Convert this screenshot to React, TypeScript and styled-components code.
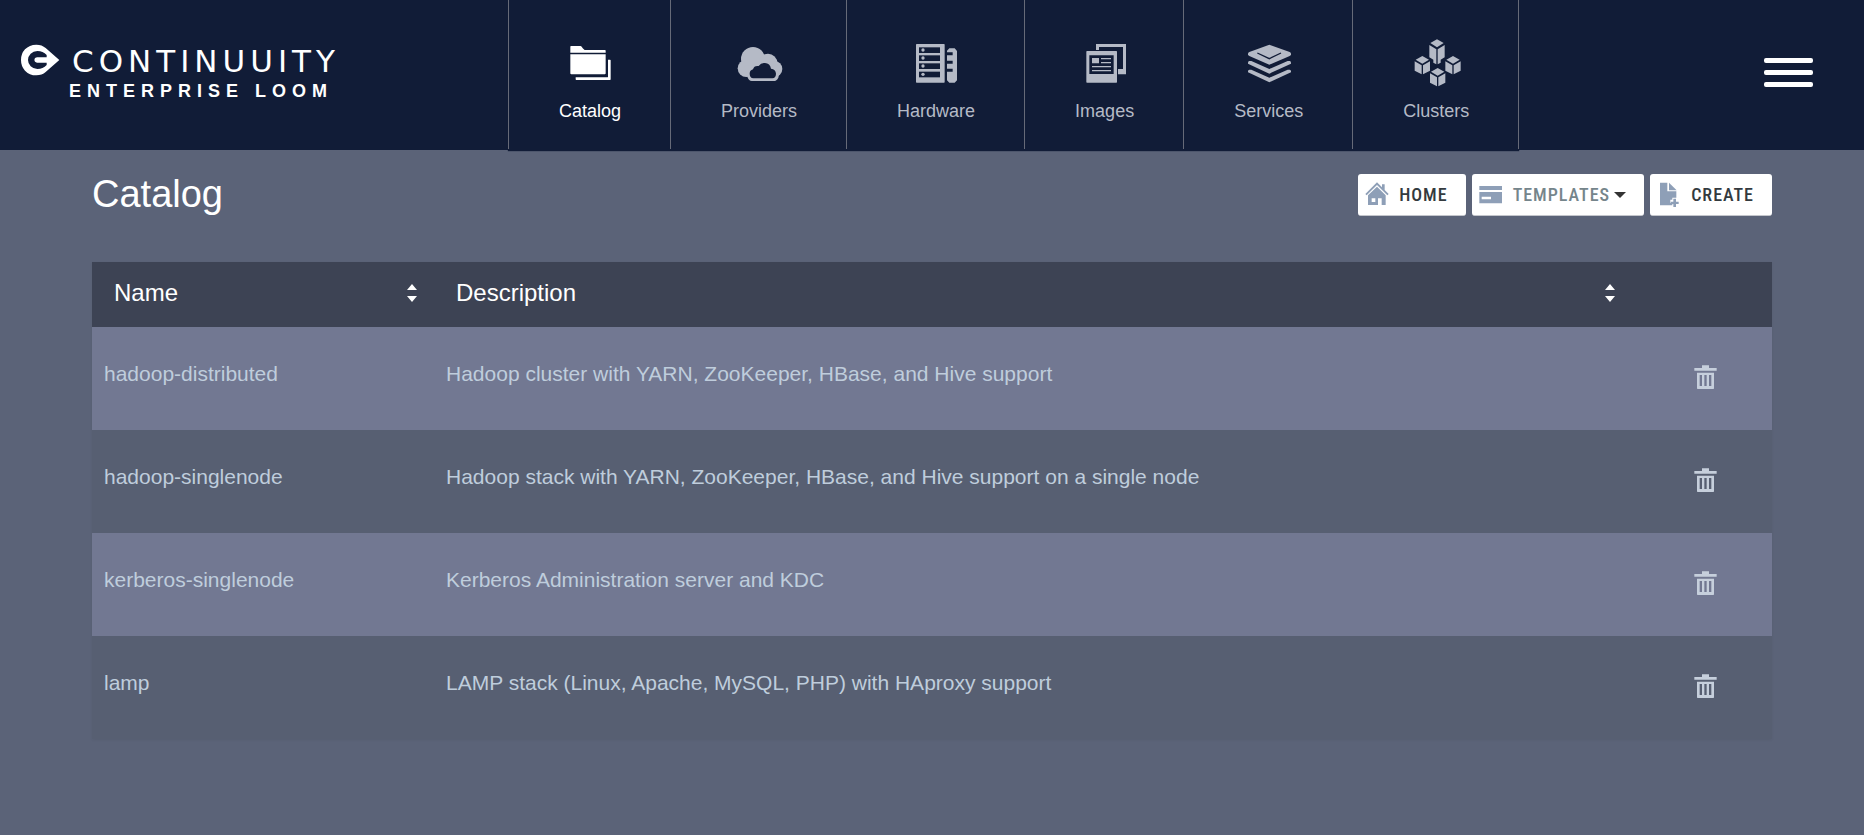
import React from 'react';
import styled, { createGlobalStyle } from 'styled-components';

const navy = '#111c37';

const GlobalStyle = createGlobalStyle`
  *, *::before, *::after { box-sizing: border-box; }
  html { background: #5b6378; }
  body {
    margin: 0;
    background: #5b6378;
    color: #ffffff;
    font-family: "Liberation Sans", Arial, sans-serif;
  }
`;

const Header = styled.header`
  display: flex;
  align-items: stretch;
  height: 150px;
  background: ${navy};
`;

const Logo = styled.a`
  flex: 0 0 508px;
  display: flex;
  align-items: flex-start;
  gap: 12px;
  padding: 44px 0 0 20px;
  color: #ffffff;
  text-decoration: none;
`;

const LogoMark = styled.svg`
  flex: none;
  width: 40px;
  height: 32px;
`;

const LogoWords = styled.span`
  display: flex;
  flex-direction: column;
  white-space: nowrap;
`;

const Brand = styled.span`
  font-family: "DejaVu Sans", sans-serif;
  font-size: 31px;
  font-weight: 400;
  line-height: 34px;
  letter-spacing: 5px;
`;

const Product = styled.span`
  font-size: 18px;
  font-weight: 700;
  line-height: 26px;
  letter-spacing: 6px;
  margin-left: -3px;
`;

const Nav = styled.nav`
  display: flex;
  height: 149px;
  border-right: 1px solid #666a78;
  box-shadow: 0 2px 1px ${navy};
`;

const NavItem = styled.a<{ $active?: boolean }>`
  display: flex;
  flex-direction: column;
  align-items: center;
  gap: 12px;
  padding: 39px 49px 0 50px;
  border-left: 1px solid #666a78;
  color: ${(p) => (p.$active ? '#ffffff' : '#b5bac6')};
  font-size: 18px;
  line-height: 24px;
  text-decoration: none;
`;

const NavIcon = styled.svg`
  width: 48px;
  height: 48px;
  overflow: visible;
  fill: currentColor;
`;

const MenuButton = styled.button`
  align-self: flex-start;
  display: flex;
  flex-direction: column;
  gap: 7px;
  margin: 58px 51px 0 auto;
  padding: 0;
  border: 0;
  background: none;
  cursor: pointer;
`;

const MenuBar = styled.span`
  width: 49px;
  height: 5px;
  border-radius: 2px;
  background: #ffffff;
`;

const Main = styled.main`
  padding: 0 92px 48px;
`;

const TitleRow = styled.div`
  display: flex;
  justify-content: space-between;
  align-items: flex-start;
  height: 112px;
  padding-top: 24px;
`;

const Title = styled.h1`
  margin: 0;
  font-size: 38px;
  font-weight: 400;
  line-height: 40px;
`;

const Toolbar = styled.div`
  display: flex;
  gap: 6px;
`;

const ToolButton = styled.button<{ $muted?: boolean }>`
  display: flex;
  align-items: center;
  height: 42px;
  padding: 0 18px 0 7px;
  border: 1px solid #c4c6cc;
  border-width: 0 0 1px;
  border-radius: 3px;
  background: #ffffff;
  color: ${(p) => (p.$muted ? '#75858b' : '#333a3e')};
  font-family: "Liberation Sans Narrow", "Roboto Condensed", sans-serif;
  font-size: 18px;
  font-weight: 500;
  line-height: 24px;
  letter-spacing: 1px;
  cursor: pointer;
`;

const ToolIcon = styled.svg`
  width: 24px;
  height: 26px;
  margin-right: 10px;
  fill: #8e9fb7;
`;

const Caret = styled.span`
  margin-left: 4px;
  border: 6px solid transparent;
  border-top-color: #333333;
  border-bottom: 0;
`;

const Table = styled.table`
  width: 100%;
  table-layout: fixed;
  border-collapse: collapse;
  box-shadow: 0 1px 3px rgba(0, 0, 0, 0.06);
`;

const HeadCell = styled.th<{ $width?: string }>`
  width: ${(p) => p.$width ?? 'auto'};
  height: 65px;
  padding: 0 17px 0 22px;
  background: #3d4354;
  font-size: 24px;
  font-weight: 400;
  line-height: 28px;
  text-align: left;
`;

const SortButton = styled.button`
  display: flex;
  align-items: center;
  justify-content: space-between;
  width: 100%;
  padding: 0 0 4px;
  border: 0;
  background: none;
  color: inherit;
  font: inherit;
  cursor: pointer;
`;

const SortIcon = styled.svg`
  width: 10px;
  height: 18px;
  fill: #ffffff;
`;

const Row = styled.tr`
  height: 103px;
  background: #575f72;
  color: #bfcddc;
  &:nth-child(odd) { background: #727892; }
`;

const Cell = styled.td`
  padding: 35px 12px 0;
  font-size: 21px;
  line-height: 24px;
  vertical-align: top;
`;

const RowLink = styled.a`
  color: inherit;
  text-decoration: none;
`;

const ActionCell = styled.td`
  padding: 38px 0 0 62px;
  vertical-align: top;
`;

const DeleteButton = styled.button`
  display: block;
  padding: 0;
  border: 0;
  background: none;
  color: #c6cfdc;
  cursor: pointer;
`;

const TrashSvg = styled.svg`
  display: block;
  width: 23px;
  height: 24px;
  fill: currentColor;
`;

const FolderShape = () => (
  <>
    <path d="M15 21h28q3 0 5 4t8 8h61q2 0 2 2v6H13V23q0-2 2-2z" />
    <path d="M13 46h106v57q0 3-3 3H16q-3 0-3-3z" />
    <path d="M126 62h6q2 0 2 2v57q0 2-2 2H31q-2 0-2-2v-6h95q2 0 2-2z" />
  </>
);

const CloudShape = () => (
  <>
    <circle cx="54" cy="60" r="36" />
    <circle cx="34" cy="88" r="26" />
    <circle cx="99" cy="72" r="28" />
    <circle cx="118" cy="90" r="24" />
    <path d="M28 80h110l-8 36q-5 10-14 10H50q-8 0-13-13z" />
    <path
      fill={navy}
      d="M55 118q-11-2-11-14 0-10 10-13 3-12 17-10 7-10 19-9 15 1 18 17 14 2 15 15 0 12-11 14z"
    />
  </>
);

const HardwareShape = () => (
  <>
    <rect x="12" y="15" width="86" height="116" rx="2" />
    {[25, 49, 73, 98].map((y) => (
      <g key={y}>
        <rect x="21" y={y} width="63" height="17" fill={navy} />
        <circle cx="33" cy={y + 8} r="5" />
      </g>
    ))}
    <path d="M112 28h16l7 8v88l-7 7h-16l-7-7V98h17v-9h-17V74h17v-9h-17V49h17v-9h-17v-5z" />
  </>
);

const ImagesShape = () => (
  <>
    <path d="M45 15h90v91h-24V90h15V24H54v9h-9z" />
    <path fillRule="evenodd" d="M18 36h88q2 0 2 2v91q0 2-2 2H18q-2 0-2-2V38q0-2 2-2zM25 49v56h73V49z" />
    <path d="M33 57h21v16H33zM60 57h30v4H60zM60 69h30v4H60zM33 81h57v4H33zM33 93h57v4H33z" />
  </>
);

const ServicesShape = () => (
  <>
    <path d="M73 17l61 22q4 2 4 5v2q0 3-4 5L73 77 13 51q-4-2-4-5v-2q0-3 4-5z" />
    <path d="M37 42l36 17 35-17" fill="none" stroke={navy} strokeWidth="4" />
    <path d="M13 66h6l54 24 55-24h6q4 1 4 5v3l-65 30L9 74v-3q0-4 4-5z" />
    <path d="M13 92h6l54 24 55-24h6q4 1 4 5v3l-65 30L9 100v-3q0-4 4-5z" />
  </>
);

const Cube = ({ x, y }: { x: number; y: number }) => (
  <path
    transform={`translate(${x} ${y})`}
    d="M23 0l20 11-20 12L3 11zM0 16l21 12v27L0 44zM46 16L25 28v27l21-11z"
  />
);

const ClustersShape = () => (
  <>
    <path d="M75 1l20 11-20 13-20-13zM52 18l21 13v45l-9-5V62l-12-7zM98 18L77 31v45l9-5V62l12-7z" />
    <Cube x={8} y={51} />
    <Cube x={100} y={51} />
    <Cube x={54} y={87} />
  </>
);

const HomeShape = () => (
  <>
    <path d="M36 1l15 15v-9h8v17l12 12-4 4L36 9 5 40l-4-4z" />
    <path fillRule="evenodd" d="M36 14l26 26v29H50V49H39v20H9V40zM20 49v11h11V49z" />
  </>
);

const TemplatesShape = () => (
  <>
    <rect x="1" y="12" width="68" height="12" />
    <path fillRule="evenodd" d="M1 30h68v34H1zM8 44v8h28v-8z" />
  </>
);

const CreateShape = () => (
  <>
    <path d="M9 2h22v26h27v19H46v6h-6v10h6v7H9z" />
    <path d="M36 2l23 23H36z" />
    <path d="M49 50h8v9h8v7h-8v9h-8v-9h-8v-7h8z" />
  </>
);

const navItems = [
  { label: 'Catalog', Shape: FolderShape, active: true },
  { label: 'Providers', Shape: CloudShape },
  { label: 'Hardware', Shape: HardwareShape },
  { label: 'Images', Shape: ImagesShape },
  { label: 'Services', Shape: ServicesShape },
  { label: 'Clusters', Shape: ClustersShape },
];

const tools = [
  { label: 'HOME', Shape: HomeShape },
  { label: 'TEMPLATES', Shape: TemplatesShape, menu: true },
  { label: 'CREATE', Shape: CreateShape },
];

const templates = [
  { name: 'hadoop-distributed', description: 'Hadoop cluster with YARN, ZooKeeper, HBase, and Hive support' },
  { name: 'hadoop-singlenode', description: 'Hadoop stack with YARN, ZooKeeper, HBase, and Hive support on a single node' },
  { name: 'kerberos-singlenode', description: 'Kerberos Administration server and KDC' },
  { name: 'lamp', description: 'LAMP stack (Linux, Apache, MySQL, PHP) with HAproxy support' },
];

const SortHeading = ({ label }: { label: string }) => (
  <SortButton type="button">
    {label}
    <SortIcon viewBox="0 0 10 18" aria-hidden="true">
      <path d="M5 0l5 6H0zM0 12h10l-5 6z" />
    </SortIcon>
  </SortButton>
);

export default function App() {
  return (
    <>
      <GlobalStyle />
      <Header>
        <Logo href="#">
          <LogoMark viewBox="0 0 120 96" aria-hidden="true">
            <path
              fill="#ffffff"
              d="M49 2q17 0 28 10l41 36-41 36q-11 10-28 10Q28 94 15 80 3 67 3 48T15 16Q28 2 49 2z"
            />
            <path
              fill={navy}
              d="M80 33Q69 21 52 21 40 21 32 29T24 48t8 19 20 8q17 0 28-12v-7H51q-8-1-8-8t8-8h29z"
            />
          </LogoMark>
          <LogoWords>
            <Brand>CONTINUUITY</Brand>
            <Product>ENTERPRISE LOOM</Product>
          </LogoWords>
        </Logo>
        <Nav aria-label="Main">
          {navItems.map(({ label, Shape, active }) => (
            <NavItem key={label} href="#" $active={active} aria-current={active ? 'page' : undefined}>
              <NavIcon viewBox="0 0 144 144" aria-hidden="true">
                <Shape />
              </NavIcon>
              {label}
            </NavItem>
          ))}
        </Nav>
        <MenuButton type="button" aria-label="Menu">
          <MenuBar />
          <MenuBar />
          <MenuBar />
        </MenuButton>
      </Header>
      <Main>
        <TitleRow>
          <Title>Catalog</Title>
          <Toolbar>
            {tools.map(({ label, Shape, menu }) => (
              <ToolButton key={label} type="button" $muted={menu} aria-haspopup={menu ? 'menu' : undefined}>
                <ToolIcon viewBox="0 0 72 78" aria-hidden="true">
                  <Shape />
                </ToolIcon>
                {label}
                {menu && <Caret />}
              </ToolButton>
            ))}
          </Toolbar>
        </TitleRow>
        <Table>
          <thead>
            <tr>
              <HeadCell $width="342px" scope="col"><SortHeading label="Name" /></HeadCell>
              <HeadCell scope="col"><SortHeading label="Description" /></HeadCell>
              <HeadCell as="td" $width="140px" />
            </tr>
          </thead>
          <tbody>
            {templates.map(({ name, description }) => (
              <Row key={name}>
                <Cell><RowLink href="#">{name}</RowLink></Cell>
                <Cell>{description}</Cell>
                <ActionCell>
                  <DeleteButton type="button" aria-label={`Delete ${name}`}>
                    <TrashSvg viewBox="0 0 69 72" aria-hidden="true">
                      <path
                        fillRule="evenodd"
                        d="M24 1h21v8h23v8H1V9h23zM9 23h51v47q0 2-2 2H11q-2 0-2-2zM17 30v33h7V30zM31 30v33h7V30zM45 30v33h7V30z"
                      />
                    </TrashSvg>
                  </DeleteButton>
                </ActionCell>
              </Row>
            ))}
          </tbody>
        </Table>
      </Main>
    </>
  );
}
